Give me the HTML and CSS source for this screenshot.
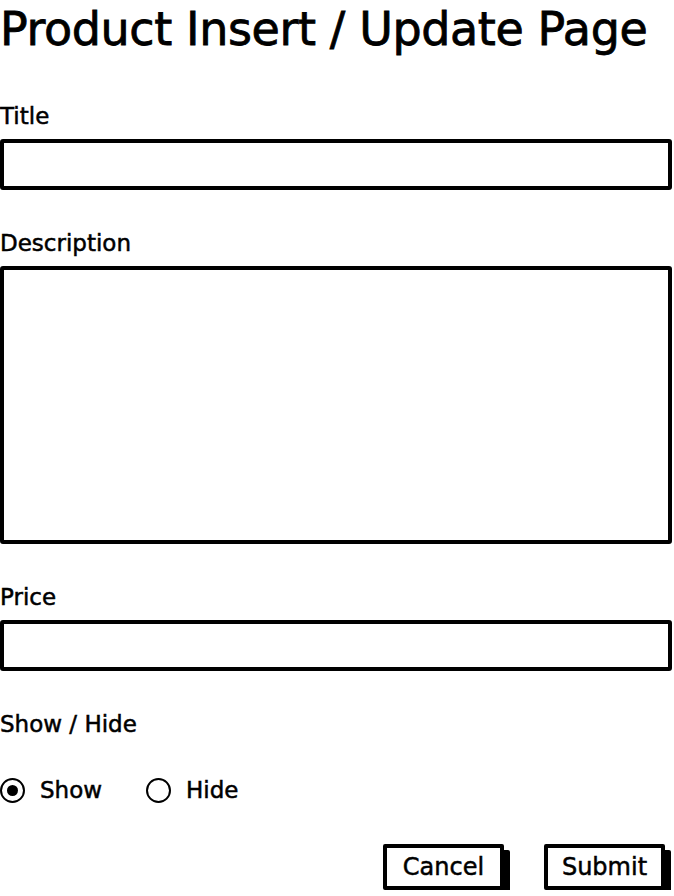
FILE: index.html
```html
<!DOCTYPE html>
<html lang="en">
<head>
    <meta charset="UTF-8">
    <meta name="viewport" content="width=device-width, initial-scale=1.0">
    <title>Product Insert / Update Page</title>
    <link rel="stylesheet" href="styles.css">
</head>
<body>
    <div class="page">
        <h1>Product Insert / Update Page</h1>

        <div class="field">
            <label for="title">Title</label>
            <input class="box" id="title" type="text">
        </div>

        <div class="field">
            <label for="description">Description</label>
            <textarea class="box area" id="description"></textarea>
        </div>

        <div class="field">
            <label for="price">Price</label>
            <input class="box" id="price" type="text">
        </div>

        <div class="field">
            <label>Show / Hide</label>
            <div class="radios">
                <span class="radio"><span class="dot checked"></span>Show</span>
                <span class="radio"><span class="dot"></span>Hide</span>
            </div>
        </div>

        <div class="actions">
            <button class="btn">Cancel</button>
            <button class="btn">Submit</button>
        </div>
    </div>
</body>
</html>
```

FILE: styles.css
```css
body {
    margin: 0;
    background: white;
    color: black;
    font-family: "DejaVu Sans", sans-serif;
    -webkit-text-stroke: 0.5px black;
}
.page {
    width: 672px;
    display: flex;
    flex-direction: column;
}
h1 {
    margin: 2px 0 0 0;
    font-size: 46px;
    line-height: 54px;
    font-weight: normal;
    letter-spacing: -0.4px;
    -webkit-text-stroke: 0.8px black;
}
.field {
    display: flex;
    flex-direction: column;
    margin-top: 39px;
}
.field:first-of-type {
    margin-top: 46px;
}
label {
    font-size: 23px;
    line-height: 28px;
    margin-bottom: 9px;
}
.box {
    box-sizing: border-box;
    width: 672px;
    height: 51px;
    border: 4px solid black;
    border-radius: 3px;
    background: white;
    margin: 0;
    padding: 0 10px;
    font: inherit;
    resize: none;
}
.area {
    height: 278px;
}
.radios {
    display: flex;
    gap: 44px;
    margin-top: 31px;
    font-size: 23px;
}
.radio {
    display: flex;
    align-items: center;
    gap: 15px;
    height: 24px;
}
.dot {
    box-sizing: border-box;
    width: 25px;
    height: 25px;
    border: 2px solid black;
    border-radius: 50%;
    display: flex;
    align-items: center;
    justify-content: center;
}
.dot.checked::after {
    content: "";
    width: 11px;
    height: 11px;
    border-radius: 50%;
    background: black;
}
.actions {
    display: flex;
    justify-content: flex-end;
    gap: 40px;
    margin-top: 42px;
    padding-right: 7px;
}
.btn {
    box-sizing: border-box;
    width: 121px;
    height: 46px;
    border: 4px solid black;
    border-radius: 2px;
    background: white;
    box-shadow: 6px 6px 0 black;
    font: inherit;
    font-size: 24px;
    padding: 0;
    cursor: pointer;
}
```
